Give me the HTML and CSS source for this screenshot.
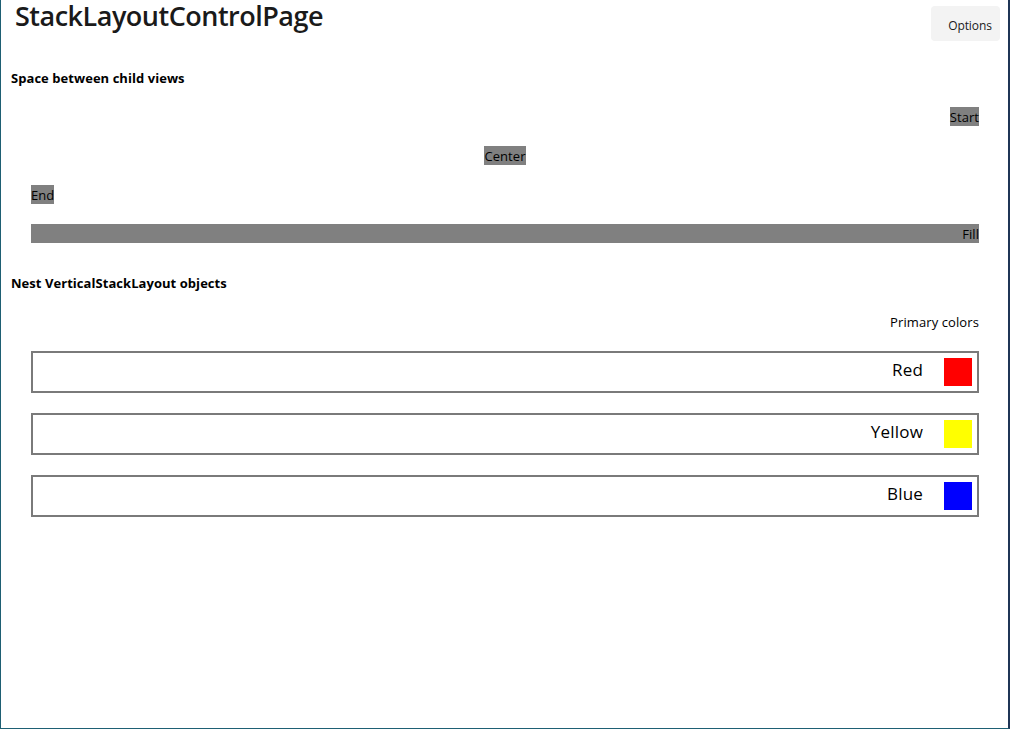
FILE: index.html
```html
<!DOCTYPE html>
<html>
<head>
<meta charset="utf-8">
<link rel="stylesheet" href="styles.css">
</head>
<body>
<div class="window">
  <header class="topbar">
    <h1 class="title">StackLayoutControlPage</h1>
    <button class="options">Options</button>
  </header>
  <main class="content">
    <h2 class="section-title">Space between child views</h2>
    <div class="align-stack">
      <div class="row row-start"><span class="chip">Start</span></div>
      <div class="row row-center"><span class="chip">Center</span></div>
      <div class="row row-end"><span class="chip">End</span></div>
      <div class="row row-fill"><span class="chip chip-fill">Fill</span></div>
    </div>
    <h2 class="section-title section-two">Nest VerticalStackLayout objects</h2>
    <div class="nest">
      <div class="nest-caption">Primary colors</div>
      <div class="color-frame"><span class="color-name">Red</span><span class="swatch red"></span></div>
      <div class="color-frame"><span class="color-name">Yellow</span><span class="swatch yellow"></span></div>
      <div class="color-frame"><span class="color-name">Blue</span><span class="swatch blue"></span></div>
    </div>
  </main>
</div>
</body>
</html>
```
FILE: styles.css
```css
html, body {
  margin: 0;
  padding: 0;
  background: #ffffff;
}
body {
  font-family: "Open Sans", "Noto Sans", "Liberation Sans", sans-serif;
  color: #000;
}
.window {
  box-sizing: border-box;
  width: 1010px;
  height: 729px;
  border-left: 1px solid #1e5f73;
  border-right: 2px solid #1f3556;
  border-bottom: 1px solid #1e6074;
  background: linear-gradient(#262626, #262626) no-repeat, #ffffff;
  background-origin: border-box;
  background-clip: border-box;
  background-size: 1px 395px, auto;
  background-position: 0 0;
}
.topbar {
  display: flex;
  justify-content: space-between;
  align-items: flex-start;
  padding: 0 8px 0 14px;
  height: 41px;
  box-sizing: border-box;
}
.title {
  margin: 0;
  font-size: 27px;
  font-weight: 600;
  letter-spacing: -0.5px;
  line-height: 32px;
  color: #1a1a1a;
}
.options {
  font-family: inherit;
  margin-top: 6px;
  width: 69px;
  height: 35px;
  border: none;
  border-radius: 4px;
  background: #f3f3f3;
  color: #1a1a1a;
  font-size: 12px;
  padding: 3px 0 0 9px;
  letter-spacing: -0.1px;
}
.content {
  padding: 0 29px 0 10px;
}
.section-title {
  margin: 28px 0 0 0;
  font-size: 13px;
  font-weight: 700;
  line-height: 19px;
  letter-spacing: 0.05px;
}
.section-two {
  margin-top: 31px;
}
.align-stack {
  margin: 19px 0 0 20px;
  display: flex;
  flex-direction: column;
  gap: 20px;
}
.row {
  display: flex;
  height: 19px;
}
.row-start { justify-content: flex-end; }
.row-center { justify-content: center; }
.row-end { justify-content: flex-start; }
.chip {
  box-sizing: border-box;
  background: #808080;
  color: #000;
  font-size: 13px;
  line-height: 18px;
  padding-top: 1px;
  height: 19px;
  letter-spacing: 0.05px;
}
.chip-fill {
  flex: 1;
  text-align: right;
}
.nest {
  margin: 20px 0 0 20px;
  display: flex;
  flex-direction: column;
  gap: 20px;
}
.nest-caption {
  text-align: right;
  font-size: 13px;
  line-height: 19px;
  letter-spacing: 0.1px;
  margin-bottom: -1px;
}
.color-frame {
  box-sizing: border-box;
  height: 42px;
  border: 2px solid #7a7a7a;
  padding: 5px;
  display: flex;
  justify-content: flex-end;
  align-items: center;
  gap: 21px;
}
.color-name {
  font-size: 17px;
  line-height: 24px;
  letter-spacing: 0.2px;
  margin-top: -4px;
}
.swatch {
  width: 28px;
  height: 28px;
}
.red { background: #ff0000; }
.yellow { background: #ffff00; }
.blue { background: #0000ff; }
```
